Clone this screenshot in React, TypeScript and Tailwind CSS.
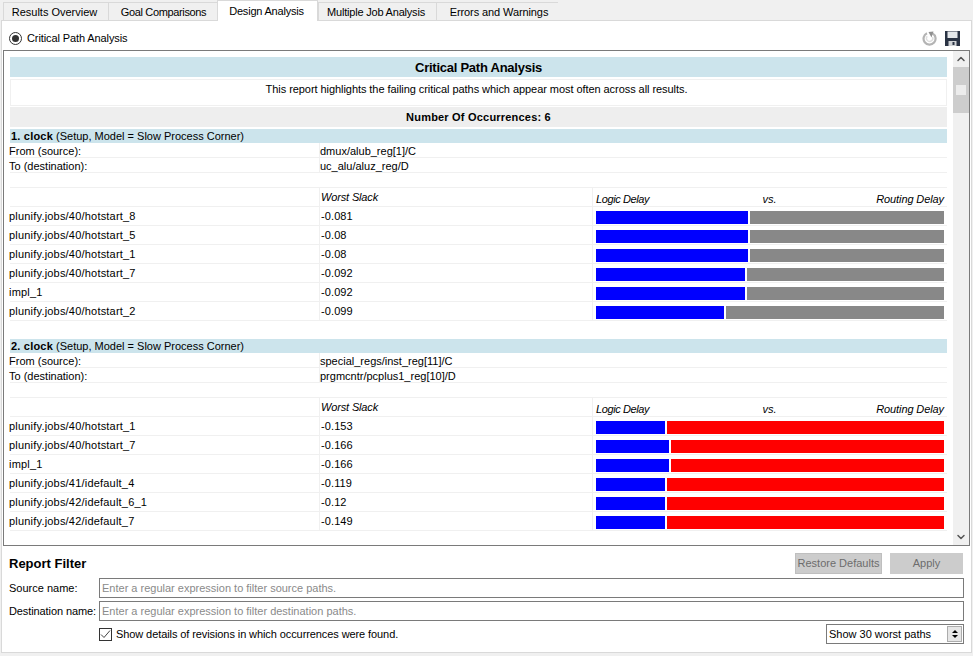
import { ChevronDown, ChevronUp } from "lucide-react";

const tabs = [
  { label: "Results Overview", w: "w-[105px]", cls: "pr-[3px] pt-[1px]" },
  { label: "Goal Comparisons", w: "w-[109px]", cls: "tracking-[-0.35px] pl-[1px] pt-[1px]" },
  { label: "Design Analysis", w: "w-[101px]", cls: "tracking-[-0.2px] pr-[2px] pt-[1px]", active: true },
  { label: "Multiple Job Analysis", w: "w-[118px]", cls: "tracking-[-0.2px] pr-[3px] pt-[1px]" },
  { label: "Errors and Warnings", w: "w-[122px]", cls: "tracking-[-0.1px] pl-[3px] pt-[1px]" },
];

const groups = [
  {
    title: "1. clock",
    from: "dmux/alub_reg[1]/C",
    to: "uc_alu/aluz_reg/D",
    color: "bg-[#888888]",
    rows: [
      { name: "plunify.jobs/40/hotstart_8", slack: "-0.081", logic: 152 },
      { name: "plunify.jobs/40/hotstart_5", slack: "-0.08", logic: 152 },
      { name: "plunify.jobs/40/hotstart_1", slack: "-0.08", logic: 152 },
      { name: "plunify.jobs/40/hotstart_7", slack: "-0.092", logic: 149 },
      { name: "impl_1", slack: "-0.092", logic: 149 },
      { name: "plunify.jobs/40/hotstart_2", slack: "-0.099", logic: 128 },
    ],
  },
  {
    title: "2. clock",
    from: "special_regs/inst_reg[11]/C",
    to: "prgmcntr/pcplus1_reg[10]/D",
    color: "bg-[#ff0000]",
    rows: [
      { name: "plunify.jobs/40/hotstart_1", slack: "-0.153", logic: 69 },
      { name: "plunify.jobs/40/hotstart_7", slack: "-0.166", logic: 73 },
      { name: "impl_1", slack: "-0.166", logic: 73 },
      { name: "plunify.jobs/41/idefault_4", slack: "-0.119", logic: 69 },
      { name: "plunify.jobs/42/idefault_6_1", slack: "-0.12", logic: 69 },
      { name: "plunify.jobs/42/idefault_7", slack: "-0.149", logic: 69 },
    ],
  },
];

function Row({ a, b, c, h }: { a?: React.ReactNode; b?: React.ReactNode; c?: React.ReactNode; h: string }) {
  return (
    <div className={`flex ${h} border-b border-[#f0f0f0]`}>
      <div className="w-[311px] shrink-0 border-r border-[#f0f0f0] -ml-[1px] flex items-center whitespace-nowrap tracking-[0.2px]">{a}</div>
      <div className="w-[273px] shrink-0 border-r border-[#f0f0f0] pl-[1px] flex items-center whitespace-nowrap tracking-[0.1px]">{b}</div>
      <div className="flex-1 min-w-0 flex items-center pl-[3px] pr-[3px]">{c}</div>
    </div>
  );
}

function InfoRow({ a, b, h }: { a?: React.ReactNode; b?: React.ReactNode; h: string }) {
  return (
    <div className={`flex ${h} border-b border-[#f0f0f0]`}>
      <div className="w-[311px] shrink-0 border-r border-[#f0f0f0] -ml-[1px] pt-[3px] flex items-center whitespace-nowrap">{a}</div>
      <div className="flex-1 pt-[3px] flex items-center whitespace-nowrap">{b}</div>
    </div>
  );
}

function Group({ g }: { g: (typeof groups)[number] }) {
  return (
    <div className="mb-[18px]">
      <div className="h-[14px] bg-[#cce4ec] leading-[15px] pl-[1px] text-black whitespace-nowrap">
        <span className="font-bold tracking-[0.2px]">{g.title}</span> (Setup, Model = Slow Process Corner)
      </div>
      <InfoRow h="h-[15px]" a="From (source):" b={g.from} />
      <InfoRow h="h-[15px]" a="To (destination):" b={g.to} />
      <div className="h-[15px] border-b border-[#f0f0f0]" />
      <Row
        h="h-[19px]"
        b={<span className="italic tracking-[-0.15px]">Worst Slack</span>}
        c={
          <div className="flex w-full justify-between italic pt-[4px]">
            <span className="tracking-[-0.4px]">Logic Delay</span>
            <span className="ml-[14px]">vs.</span>
            <span className="tracking-[-0.1px]">Routing Delay</span>
          </div>
        }
      />
      {g.rows.map((r, i) => (
        <Row
          key={i}
          h="h-[19px]"
          a={r.name}
          b={r.slack}
          c={
            <div className="flex w-full h-[13px] gap-[2px] -mr-[1px] translate-y-[1px]">
              <div className="bg-[#0000ff] shrink-0" style={{ width: r.logic }} />
              <div className={`${g.color} flex-1`} />
            </div>
          }
        />
      ))}
    </div>
  );
}

export default function App() {
  return (
    <div className="w-[973px] h-[656px] bg-[#f0f0f0] text-[11px] text-black overflow-hidden font-['Liberation_Sans',Arial,sans-serif]">
      <div className="flex items-end h-[20px] pl-[3px]">
        {tabs.map((t) => (
          <div
            key={t.label}
            className={`${t.w} ${t.cls} flex items-center justify-center border border-[#d9d9d9] whitespace-nowrap ${
              t.active ? "h-[21px] bg-white border-b-0 -mb-[1px] z-10" : "h-[18px] border-b-0 border-r-0 bg-[#f0f0f0]"
            }`}
          >
            {t.label}
          </div>
        ))}
      </div>
      <div className="mx-[1px] h-[633px] border border-[#d9d9d9] bg-white flex flex-col">
        {/* Radio + tools */}
        <div className="h-[29px] flex items-center pt-[5px] pl-[7px] pr-[11px] shrink-0">
          <div className="w-[13px] h-[13px] rounded-full border border-[#333] flex items-center justify-center">
            <div className="w-[7px] h-[7px] rounded-full bg-[#333]" />
          </div>
          <span className="ml-[5px] tracking-[-0.1px]">Critical Path Analysis</span>
          <div className="ml-auto flex items-center gap-[8px]">
            <svg width="15" height="15" viewBox="0 0 15 15" fill="none">
              <path d="M5 2.2A6 6 0 1 0 10.5 2.4" stroke="#b4b4b4" strokeWidth="2.2" />
              <path d="M5.2 5.2A3.2 3.2 0 1 0 10.6 6" stroke="#dedede" strokeWidth="1.4" />
              <path d="M6.5 1L11.5 0.5L9.5 6.5z" fill="#909090" />
            </svg>
            <svg width="15" height="15" viewBox="0 0 15 15">
              <path d="M0 0h15v15H0z" fill="#2a3344" />
              <path d="M2.5 0.5h10v6.5h-10z" fill="#e4e7ea" />
              <path d="M3.5 10h8v5h-8z" fill="#d0d3d6" />
              <path d="M7.5 11h2v3h-2z" fill="#2a3344" />
            </svg>
          </div>
        </div>

        {/* Report */}
        <div className="mx-[1px] h-[496px] border border-[#7a7a7a] flex shrink-0">
          <div className="flex-1 min-w-0 overflow-hidden pt-[6px] pl-[6px] pr-[6px]">
            <div className="h-[20px] pt-[1px] bg-[#cce4ec] text-[13px] font-bold flex items-center justify-center tracking-[-0.25px]">
              Critical Path Analysis
            </div>
            <div className="h-[27px] mt-[2px] pb-[6px] pr-[4px] border border-[#f0f0f0] flex items-center justify-center tracking-[-0.06px]">
              This report highlights the failing critical paths which appear most often across all results.
            </div>
            <div className="h-[20px] mt-[1px] bg-[#eeeeee] font-bold flex items-center justify-center tracking-[0.2px]">
              Number Of Occurrences: 6
            </div>
            <div className="mt-[2px]">
              {groups.map((g) => (
                <Group key={g.title} g={g} />
              ))}
            </div>
          </div>
          <div className="w-[16px] shrink-0 bg-[#f0f0f0] flex flex-col items-center">
            <div className="h-[16px] flex items-center justify-center shrink-0">
              <ChevronUp size={12} strokeWidth={3} color="#555" />
            </div>
            <div className="w-full h-[46px] bg-[#cdcdcd] flex items-center justify-center shrink-0">
              <div className="w-[10px] h-[10px] bg-[#ececec]" />
            </div>
            <div className="flex-1" />
            <div className="h-[16px] flex items-center justify-center shrink-0">
              <ChevronDown size={12} strokeWidth={3} color="#555" />
            </div>
          </div>
        </div>

        {/* Report filter */}
        <div className="flex-1 pl-[7px] pr-[6px] flex flex-col">
          <div className="flex items-center justify-between h-[21px] mt-[7px]">
            <span className="font-bold text-[13px]">Report Filter</span>
            <div className="flex gap-[8px] mr-[2px]">
              <div className="w-[87px] h-[21px] bg-[#cccccc] border border-[#bfbfbf] text-[#6d6d6d] flex items-center justify-center whitespace-nowrap">
                Restore Defaults
              </div>
              <div className="w-[73px] h-[21px] bg-[#cccccc] border border-[#cccccc] text-[#6d6d6d] flex items-center justify-center">
                Apply
              </div>
            </div>
          </div>
          <div className="flex items-center h-[20px] mt-[4px]">
            <span className="w-[90px] shrink-0 whitespace-nowrap">Source name:</span>
            <div className="flex-1 mr-[1px] h-[20px] border border-[#7a7a7a] pl-[2px] flex items-center text-[#8a8a8a]">
              Enter a regular expression to filter source paths.
            </div>
          </div>
          <div className="flex items-center h-[20px] mt-[3px]">
            <span className="w-[90px] shrink-0 whitespace-nowrap tracking-[-0.1px]">Destination name:</span>
            <div className="flex-1 mr-[1px] h-[20px] border border-[#7a7a7a] pl-[2px] flex items-center text-[#8a8a8a]">
              Enter a regular expression to filter destination paths.
            </div>
          </div>
          <div className="flex items-center h-[20px] mt-[3px]">
            <div className="ml-[90px] w-[13px] h-[13px] border border-[#333] flex items-center justify-center">
              <svg width="11" height="11" viewBox="0 0 11 11" fill="none">
                <path d="M1 5.5l3 3 6-7" stroke="#444" strokeWidth="1" />
              </svg>
            </div>
            <span className="ml-[4px] tracking-[-0.09px]">Show details of revisions in which occurrences were found.</span>
            <div className="ml-auto mr-[1px] w-[138px] h-[20px] border border-[#7a7a7a] flex items-center pl-[2px] pr-[1px]">
              <span>Show 30 worst paths</span>
              <div className="ml-auto w-[15px] h-[16px] border border-[#acacac] bg-[#e6e6e6] flex flex-col items-center justify-center gap-[2px]">
                <div className="w-0 h-0 border-x-[3px] border-x-transparent border-b-[3px] border-b-black" />
                <div className="w-0 h-0 border-x-[3px] border-x-transparent border-t-[3px] border-t-black" />
              </div>
            </div>
          </div>
        </div>
      </div>
    </div>
  );
}
